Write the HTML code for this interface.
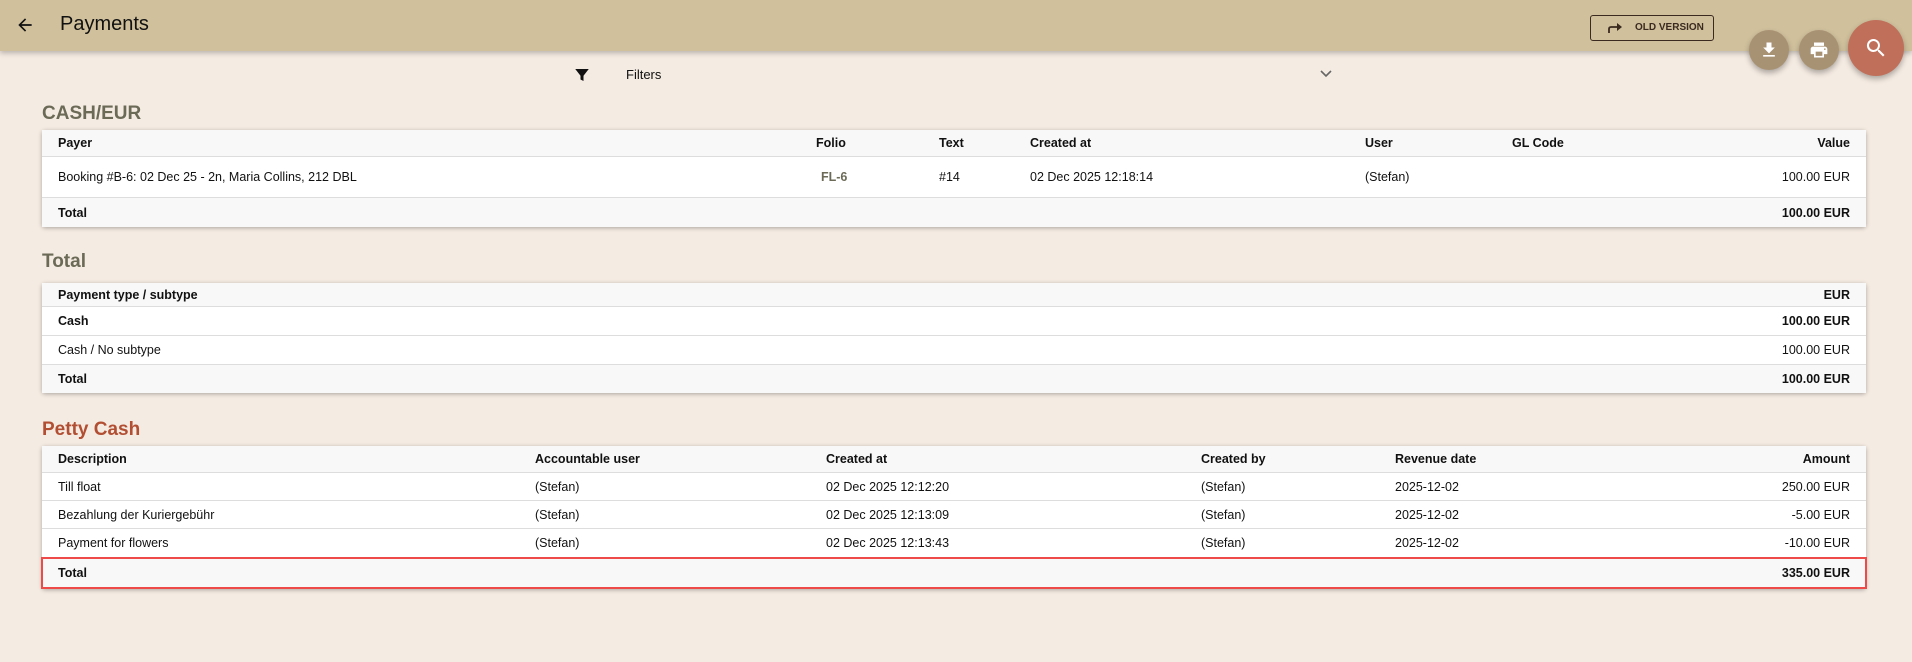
<!DOCTYPE html>
<html><head><meta charset="utf-8"><style>
*{box-sizing:border-box;margin:0;padding:0}
body{width:1912px;height:662px;background:#f4ebe2;font-family:"Liberation Sans",sans-serif;color:#111;position:relative;overflow:hidden;font-size:12.5px}
.hdr{position:absolute;left:0;top:0;width:1912px;height:51px;background:#d0c09c;box-shadow:0 2px 5px rgba(0,0,0,.25)}
.hdr .t{position:absolute;left:60px;top:13px;font-size:20px;color:#111}
.ov{position:absolute;left:1590px;top:15px;width:124px;height:26px;border:1.5px solid #3a2a20;border-radius:3px;font-size:10px;font-weight:bold;color:#3a2a20;line-height:23px;padding-left:44px}
.fab{position:absolute;border-radius:50%;box-shadow:0 3px 6px rgba(0,0,0,.3);display:flex;align-items:center;justify-content:center}
.h{position:absolute;left:42px;font-size:19px;font-weight:bold;color:#6b6a57}
.card{position:absolute;left:42px;width:1824px;background:#fff;border-radius:3px;box-shadow:0 1px 4px rgba(0,0,0,.3);overflow:visible}
.row{position:relative;border-bottom:1px solid #ddd}
.row:last-child{border-bottom:none}
.row span{position:absolute;top:50%;transform:translateY(-50%);white-space:nowrap}
.g{background:#f8f8f8}
.b{font-weight:bold}
.r{right:16px}
</style></head><body>
<div class="hdr">
<svg style="position:absolute;left:15px;top:15px" width="20" height="20" viewBox="0 0 24 24"><path d="M20 11H7.8l5.6-5.6L12 4l-8 8 8 8 1.4-1.4L7.8 13H20z" fill="#111"/></svg>
<div class="t">Payments</div>
<div class="ov"><svg style="position:absolute;left:16px;top:5px" width="16" height="14" viewBox="0 0 16 14"><path d="M2 12V8q0-2 2-2h8" stroke="#3a2a20" stroke-width="1.8" fill="none"/><path d="M10 2l5 4-5 4z" fill="#3a2a20"/></svg>OLD VERSION</div>
</div>
<div class="fab" style="left:1749px;top:30px;width:40px;height:40px;background:#a89274"><svg width="20" height="20" viewBox="0 0 24 24"><path d="M19 9h-4V3H9v6H5l7 7 7-7zM5 18v2h14v-2z" fill="#fff"/></svg></div>
<div class="fab" style="left:1799px;top:30px;width:40px;height:40px;background:#a89274"><svg width="20" height="20" viewBox="0 0 24 24"><path d="M19 8H5c-1.7 0-3 1.3-3 3v6h4v4h12v-4h4v-6c0-1.7-1.3-3-3-3zm-3 11H8v-5h8v5zm3-7c-.6 0-1-.4-1-1s.4-1 1-1 1 .4 1 1-.4 1-1 1zm-1-9H6v4h12V3z" fill="#fff"/></svg></div>
<div class="fab" style="left:1848px;top:20px;width:56px;height:56px;background:#c0705a"><svg width="24" height="24" viewBox="0 0 24 24"><path d="M15.5 14h-.8l-.3-.3A6.5 6.5 0 1 0 9.5 16a6.5 6.5 0 0 0 4.2-1.6l.3.3v.8l5 5 1.5-1.5-5-5zm-6 0a4.5 4.5 0 1 1 0-9 4.5 4.5 0 0 1 0 9z" fill="#fff"/></svg></div>
<svg style="position:absolute;left:573px;top:66px" width="18" height="18" viewBox="0 0 24 24"><path d="M3 4h18l-7 9v7l-4-2v-5z" fill="#111"/></svg>
<div style="position:absolute;left:626px;top:67px;font-size:13px">Filters</div>
<svg style="position:absolute;left:1319px;top:68px" width="14" height="12" viewBox="0 0 14 12"><path d="M2 3l5 5 5-5" stroke="#666" stroke-width="1.6" fill="none"/></svg>

<div class="h" style="top:103px">CASH/EUR</div>
<div class="card" style="top:130px">
<div class="row g b" style="height:27px"><span style="left:16px">Payer</span><span style="left:774px">Folio</span><span style="left:897px">Text</span><span style="left:988px">Created at</span><span style="left:1323px">User</span><span style="left:1470px">GL Code</span><span class="r">Value</span></div>
<div class="row" style="height:41px"><span style="left:16px">Booking #B-6: 02 Dec 25 - 2n, Maria Collins, 212 DBL</span><span style="left:779px;color:#6b6a57;font-weight:bold">FL-6</span><span style="left:897px">#14</span><span style="left:988px">02 Dec 2025 12:18:14</span><span style="left:1323px">(Stefan)</span><span class="r">100.00 EUR</span></div>
<div class="row g b" style="height:29px"><span style="left:16px">Total</span><span class="r">100.00 EUR</span></div>
</div>

<div class="h" style="top:251px">Total</div>
<div class="card" style="top:283px">
<div class="row g b" style="height:24px"><span style="left:16px">Payment type / subtype</span><span class="r">EUR</span></div>
<div class="row b" style="height:29px"><span style="left:16px">Cash</span><span class="r">100.00 EUR</span></div>
<div class="row" style="height:29px"><span style="left:16px">Cash / No subtype</span><span class="r">100.00 EUR</span></div>
<div class="row g b" style="height:28px"><span style="left:16px">Total</span><span class="r">100.00 EUR</span></div>
</div>

<div class="h" style="top:419px;color:#b24f33">Petty Cash</div>
<div class="card" style="top:446px">
<div class="row g b" style="height:27px"><span style="left:16px">Description</span><span style="left:493px">Accountable user</span><span style="left:784px">Created at</span><span style="left:1159px">Created by</span><span style="left:1353px">Revenue date</span><span class="r">Amount</span></div>
<div class="row" style="height:28px"><span style="left:16px">Till float</span><span style="left:493px">(Stefan)</span><span style="left:784px">02 Dec 2025 12:12:20</span><span style="left:1159px">(Stefan)</span><span style="left:1353px">2025-12-02</span><span class="r">250.00 EUR</span></div>
<div class="row" style="height:28px"><span style="left:16px">Bezahlung der Kuriergebühr</span><span style="left:493px">(Stefan)</span><span style="left:784px">02 Dec 2025 12:13:09</span><span style="left:1159px">(Stefan)</span><span style="left:1353px">2025-12-02</span><span class="r">-5.00 EUR</span></div>
<div class="row" style="height:28px;border-bottom:none"><span style="left:16px">Payment for flowers</span><span style="left:493px">(Stefan)</span><span style="left:784px">02 Dec 2025 12:13:43</span><span style="left:1159px">(Stefan)</span><span style="left:1353px">2025-12-02</span><span class="r">-10.00 EUR</span></div>
<div class="row g b" style="height:32px;border:2px solid #ef4a4a;margin-left:-1px;margin-right:-1px"><span style="left:15px">Total</span><span style="right:15px">335.00 EUR</span></div>
</div>
</body></html>
